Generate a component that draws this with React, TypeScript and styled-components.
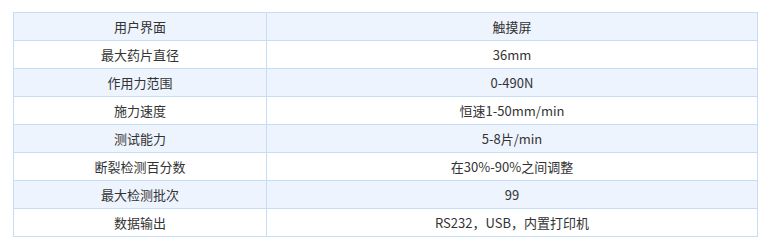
import { createGlobalStyle, styled } from "styled-components";

const GlobalStyle = createGlobalStyle`
  html, body {
    margin: 0;
    padding: 0;
    background: #ffffff;
  }
  body {
    font-family: "Noto Sans CJK SC", "Noto Sans", sans-serif;
  }
`;

const Wrapper = styled.div`
  padding: 12px 13px;
`;

const SpecTable = styled.table`
  width: 745px;
  border-collapse: collapse;
  table-layout: fixed;
`;

const Row = styled.tr<{ $striped: boolean }>`
  background-color: ${(p) => (p.$striped ? "#eef4fe" : "#ffffff")};
`;

const Cell = styled.td<{ $first?: boolean }>`
  width: ${(p) => (p.$first ? "252px" : "auto")};
  height: 27px;
  padding: 0;
  border: 1px solid #c6ddf6;
  text-align: center;
  vertical-align: middle;
  font-size: 13px;
  line-height: 27px;
  color: #333333;
`;

const specs: [string, string][] = [
  ["用户界面", "触摸屏"],
  ["最大药片直径", "36mm"],
  ["作用力范围", "0-490N"],
  ["施力速度", "恒速1-50mm/min"],
  ["测试能力", "5-8片/min"],
  ["断裂检测百分数", "在30%-90%之间调整"],
  ["最大检测批次", "99"],
  ["数据输出", "RS232，USB，内置打印机"],
];

export default function App() {
  return (
    <Wrapper>
      <GlobalStyle />
      <SpecTable>
        <tbody>
          {specs.map(([label, value], i) => (
            <Row key={label} $striped={i % 2 === 0}>
              <Cell $first>{label}</Cell>
              <Cell>{value}</Cell>
            </Row>
          ))}
        </tbody>
      </SpecTable>
    </Wrapper>
  );
}
